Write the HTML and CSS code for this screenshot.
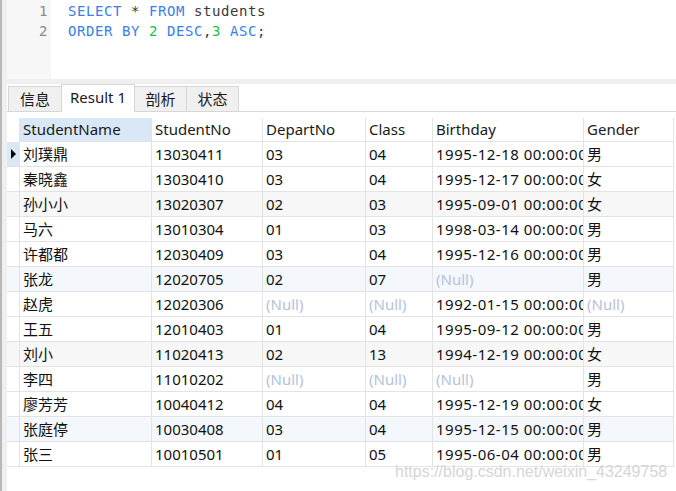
FILE: index.html
```html
<!DOCTYPE html>
<html>
<head>
<meta charset="utf-8">
<link rel="stylesheet" href="styles.css">
</head>
<body>
<div class="app">
  <div class="edge"></div>
  <div class="main">
    <div class="editor">
      <div class="gutter"><div>1</div><div>2</div></div>
      <div class="code">
        <div class="ln"><span class="kw">SELECT</span> * <span class="kw">FROM</span> students</div>
        <div class="ln"><span class="kw">ORDER BY</span> <span class="num">2</span> <span class="kw">DESC</span>,<span class="num">3</span> <span class="kw">ASC</span>;</div>
      </div>
    </div>
    <div class="band"></div>
    <div class="tabs">
      <div class="tab first">信息</div>
      <div class="tab active">Result 1</div>
      <div class="tab">剖析</div>
      <div class="tab">状态</div>
    </div>
    <div class="grid">
      <div class="row head">
        <div class="c ind"></div>
        <div class="c sel">StudentName</div>
        <div class="c">StudentNo</div>
        <div class="c">DepartNo</div>
        <div class="c">Class</div>
        <div class="c">Birthday</div>
        <div class="c">Gender</div>
      </div>
      <div class="row">
        <div class="c ind cur"><span class="arrow"></span></div>
        <div class="c">刘璞鼎</div><div class="c">13030411</div><div class="c">03</div><div class="c">04</div><div class="c dt">1995-12-18 00:00:00</div><div class="c">男</div>
      </div>
      <div class="row">
        <div class="c ind"></div>
        <div class="c">秦晓鑫</div><div class="c">13030410</div><div class="c">03</div><div class="c">04</div><div class="c dt">1995-12-17 00:00:00</div><div class="c">女</div>
      </div>
      <div class="row gray">
        <div class="c ind"></div>
        <div class="c">孙小小</div><div class="c">13020307</div><div class="c">02</div><div class="c">03</div><div class="c dt">1995-09-01 00:00:00</div><div class="c">女</div>
      </div>
      <div class="row">
        <div class="c ind"></div>
        <div class="c">马六</div><div class="c">13010304</div><div class="c">01</div><div class="c">03</div><div class="c dt">1998-03-14 00:00:00</div><div class="c">男</div>
      </div>
      <div class="row">
        <div class="c ind"></div>
        <div class="c">许都都</div><div class="c">12030409</div><div class="c">03</div><div class="c">04</div><div class="c dt">1995-12-16 00:00:00</div><div class="c">男</div>
      </div>
      <div class="row blue">
        <div class="c ind"></div>
        <div class="c">张龙</div><div class="c">12020705</div><div class="c">02</div><div class="c">07</div><div class="c null">(Null)</div><div class="c">男</div>
      </div>
      <div class="row">
        <div class="c ind"></div>
        <div class="c">赵虎</div><div class="c">12020306</div><div class="c null">(Null)</div><div class="c null">(Null)</div><div class="c dt">1992-01-15 00:00:00</div><div class="c null">(Null)</div>
      </div>
      <div class="row">
        <div class="c ind"></div>
        <div class="c">王五</div><div class="c">12010403</div><div class="c">01</div><div class="c">04</div><div class="c dt">1995-09-12 00:00:00</div><div class="c">男</div>
      </div>
      <div class="row gray">
        <div class="c ind"></div>
        <div class="c">刘小</div><div class="c">11020413</div><div class="c">02</div><div class="c">13</div><div class="c dt">1994-12-19 00:00:00</div><div class="c">女</div>
      </div>
      <div class="row">
        <div class="c ind"></div>
        <div class="c">李四</div><div class="c">11010202</div><div class="c null">(Null)</div><div class="c null">(Null)</div><div class="c null">(Null)</div><div class="c">男</div>
      </div>
      <div class="row">
        <div class="c ind"></div>
        <div class="c">廖芳芳</div><div class="c">10040412</div><div class="c">04</div><div class="c">04</div><div class="c dt">1995-12-19 00:00:00</div><div class="c">女</div>
      </div>
      <div class="row blue">
        <div class="c ind"></div>
        <div class="c">张庭停</div><div class="c">10030408</div><div class="c">03</div><div class="c">04</div><div class="c dt">1995-12-15 00:00:00</div><div class="c">男</div>
      </div>
      <div class="row">
        <div class="c ind"></div>
        <div class="c">张三</div><div class="c">10010501</div><div class="c">01</div><div class="c">05</div><div class="c dt">1995-06-04 00:00:00</div><div class="c">男</div>
      </div>
    </div>
  </div>
  <div class="watermark">https://blog.csdn.net/weixin_43249758</div>
</div>
</body>
</html>
```
FILE: styles.css
```css
html, body {
  margin: 0;
  padding: 0;
  background: #ffffff;
}
body {
  width: 676px;
  height: 491px;
  overflow: hidden;
}
.app {
  position: relative;
  display: flex;
  width: 676px;
  height: 491px;
  overflow: hidden;
}
.edge {
  width: 7px;
  flex: none;
  background: linear-gradient(to right, #b8b8b8 0, #b8b8b8 2px, #efefef 2px, #efefef 7px);
}
.main {
  flex: 1;
  display: flex;
  flex-direction: column;
  min-width: 0;
}
.editor {
  height: 79px;
  display: flex;
  font-family: "DejaVu Sans Mono", monospace;
  font-size: 14px;
  line-height: 20px;
  letter-spacing: 0.57px;
  flex: none;
}
.gutter {
  width: 44px;
  box-sizing: border-box;
  background: #f7f7f7;
  color: #8a8a8a;
  text-align: right;
  padding-right: 3px;
  padding-top: 1px;
}
.code {
  padding-left: 17px;
  padding-top: 1px;
  color: #3a3a3a;
}
.ln {
  white-space: pre;
}
.kw { color: #3b80e4; }
.num { color: #1fbf42; }
.band {
  height: 5px;
  background: #efefef;
  flex: none;
}
.tabs {
  height: 28px;
  box-sizing: border-box;
  display: flex;
  align-items: flex-end;
  border-bottom: 1px solid #d6d6d6;
  padding-left: 1px;
  flex: none;
  font-family: "Noto Sans", "Noto Sans CJK SC", sans-serif;
  font-size: 15px;
  color: #1a1a1a;
}
.tab {
  box-sizing: border-box;
  height: 25px;
  width: 53px;
  margin-left: -1px;
  border: 1px solid #d6d6d6;
  border-bottom: none;
  background: #f0f0f0;
  text-align: center;
  line-height: 20px;
  padding-top: 2px;
}
.tab.first {
  margin-left: 0;
  width: 54px;
}
.tab.active {
  position: relative;
  z-index: 1;
  width: 74px;
  height: 28px;
  margin-bottom: -1px;
  background: #ffffff;
  padding-top: 2px;
}
.grid {
  padding-top: 6px;
  font-family: "Noto Sans", "Noto Sans CJK SC", sans-serif;
  font-size: 15px;
  color: #111111;
}
.row {
  display: grid;
  grid-template-columns: 13px 132px 111px 103px 67px 151px 90px;
  height: 25px;
}
.row.head {
  height: 24px;
}
.row.gray .c { background: #f7f7f7; }
.row.blue .c { background: #f4f8fd; }
.c {
  box-sizing: border-box;
  border-right: 1px solid #e3e3e3;
  border-bottom: 1px solid #e3e3e3;
  padding-left: 3px;
  line-height: 24px;
  white-space: nowrap;
  overflow: hidden;
  text-overflow: clip;
}
.c.dt {
  letter-spacing: 0.5px;
}
.head .c {
  line-height: 23px;
  color: #1a1a1a;
}
.head .ind {
  border-bottom: none;
}
.c.sel {
  background: #d9e8f6;
}
.c.ind {
  padding-left: 0;
  display: flex;
  align-items: center;
  justify-content: center;
}
.row .c.ind.cur {
  background: #dae8f6;
}
.arrow {
  width: 0;
  height: 0;
  border-left: 5px solid #000000;
  border-top: 5px solid transparent;
  border-bottom: 5px solid transparent;
  margin-left: 1px;
}
.c.null {
  color: #b7c2d8;
}
.watermark {
  position: absolute;
  left: 395px;
  top: 464px;
  font-family: "Liberation Sans", Arial, sans-serif;
  font-size: 16px;
  line-height: 16px;
  color: #d6d6d6;
  white-space: nowrap;
}
```
